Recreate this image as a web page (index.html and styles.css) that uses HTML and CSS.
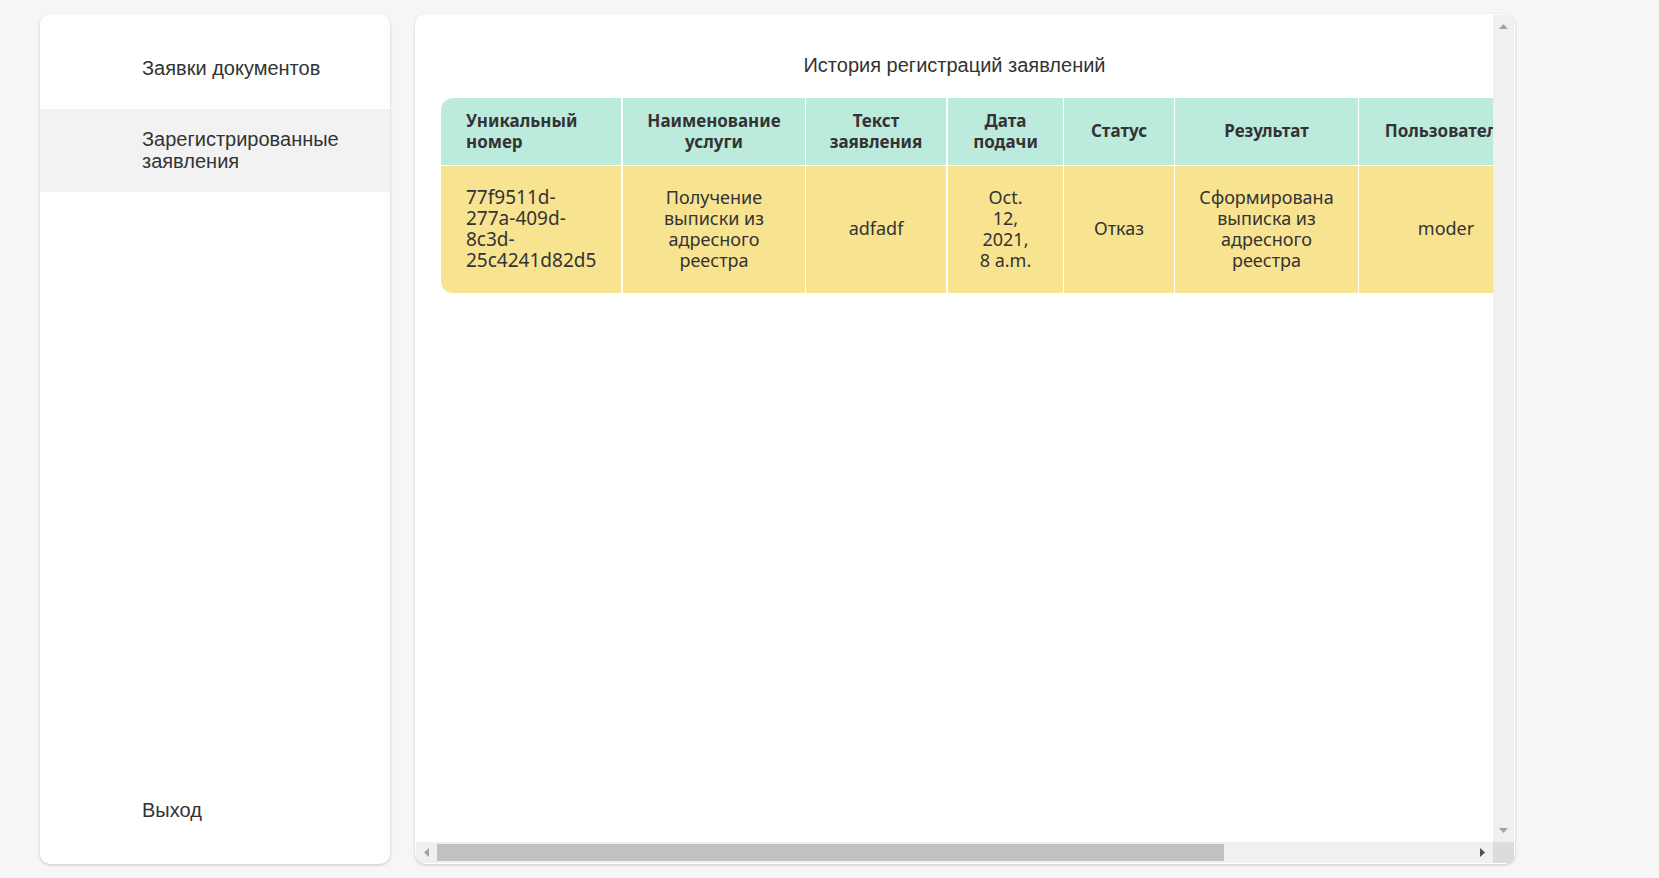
FILE: index.html
```html
<!DOCTYPE html>
<html lang="ru">
<head>
<meta charset="utf-8">
<meta name="viewport" content="width=device-width, initial-scale=1">
<title>История регистраций заявлений</title>
<link rel="stylesheet" href="styles.css">
</head>
<body>
<div class="page">
  <nav class="sidebar">
    <a class="nav-item" href="#documents">Заявки документов</a>
    <a class="nav-item active" href="#registered" aria-current="page">Зарегистрированные заявления</a>
    <a class="nav-item logout" href="#logout">Выход</a>
  </nav>
  <main class="panel">
    <div class="viewport">
      <h1 class="title">История регистраций заявлений</h1>
      <table class="history">
        <colgroup>
          <col class="col-id"><col class="col-service"><col class="col-text"><col class="col-date"><col class="col-status"><col class="col-result"><col class="col-user">
        </colgroup>
        <thead>
          <tr>
            <th class="thick" scope="col">Уникальный номер</th>
            <th scope="col">Наименование услуги</th>
            <th class="thick" scope="col">Текст заявления</th>
            <th scope="col">Дата подачи</th>
            <th scope="col">Статус</th>
            <th scope="col">Результат</th>
            <th scope="col">Пользователь</th>
          </tr>
        </thead>
        <tbody>
          <tr>
            <td class="thick number">77f9511d-<br>277a-409d-<br>8c3d-<br>25c4241d82d5</td>
            <td>Получение выписки из адресного реестра</td>
            <td class="thick">adfadf</td>
            <td>Oct.<br>12,<br>2021,<br>8 a.m.</td>
            <td>Отказ</td>
            <td>Сформирована выписка из адресного реестра</td>
            <td>moder</td>
          </tr>
        </tbody>
      </table>
    </div>
    <div class="bar bar-vertical" aria-hidden="true">
      <svg class="arrow" viewBox="0 0 21 21"><path class="muted" d="M6 14h9L10.500 9z"/></svg>
      <svg class="arrow" viewBox="0 0 21 21"><path class="muted" d="M6 7h9L10.500 12z"/></svg>
    </div>
    <div class="bar bar-horizontal" aria-hidden="true">
      <svg class="arrow" viewBox="0 0 21 21"><path class="muted" d="M13 6v9L8 10.500z"/></svg>
      <div class="track"><div class="thumb"></div></div>
      <svg class="arrow" viewBox="0 0 21 21"><path class="strong" d="M8 6v9l5-4.500z"/></svg>
    </div>
    <div class="corner"></div>
  </main>
</div>
</body>
</html>
```
FILE: styles.css
```css
* { box-sizing: border-box; }

body {
  margin: 0;
  background: #f6f6f6;
  color: #333;
  font: 20px/22px "Liberation Sans", Arial, sans-serif;
}

.page {
  display: flex;
  gap: 25px;
  height: 100vh;
  padding: 14px 40px;
}

.sidebar,
.panel {
  background: #fff;
  border-radius: 10px;
  box-shadow: 0 1px 3px rgba(0, 0, 0, 0.2);
  overflow: hidden;
}

.sidebar {
  display: flex;
  flex: 0 0 350px;
  flex-direction: column;
  gap: 10px;
  padding: 24px 0 23px;
}

.nav-item {
  padding: 19px 40px 20px 102px;
  color: inherit;
  text-decoration: none;
}

.active { background: #f2f2f2; }
.logout { margin-top: auto; }

.panel {
  display: grid;
  flex: 1;
  grid-template: minmax(0, 1fr) 21px / minmax(0, 1fr) 21px;
  max-width: 1100px;
  padding: 1px;
}

.viewport {
  overflow: auto;
  padding: 39px 25px 25px;
  scrollbar-width: none;
}

.title {
  margin: 0 0 22px;
  font-size: 20px;
  font-weight: 400;
  text-align: center;
}

.history {
  width: 1093px;
  table-layout: fixed;
  border-spacing: 0;
  font: 18px/21px "Noto Sans", "Open Sans", sans-serif;
  text-align: center;
}

.col-id { width: 182px; }
.col-service { width: 183px; }
.col-text { width: 142px; }
.col-date { width: 116px; }
.col-status { width: 111px; }
.col-result { width: 184px; }
.col-user { width: 175px; }

th,
td {
  padding: 10px 20px 12px;
  border-right: 1px solid #fff;
  background: #f8e391;
  background-clip: padding-box;
}

th {
  height: 68px;
  border-bottom: 1px solid #fff;
  background-color: #bcebdd;
  font-size: 17px;
  font-weight: 700;
}

td { height: 127px; }

.thick { border-right-width: 2px; }
.number { font-size: 19px; }

th:first-child {
  padding-left: 25px;
  border-top-left-radius: 12px;
  text-align: left;
}

td:first-child {
  padding-left: 25px;
  border-bottom-left-radius: 12px;
  text-align: left;
}

.bar {
  display: flex;
  background: #f0f0f0;
}

.bar-vertical {
  flex-direction: column;
  justify-content: space-between;
}

.arrow {
  flex: none;
  width: 21px;
  height: 21px;
}

.muted { fill: #a3a3a3; }
.strong { fill: #505050; }

.track {
  flex: 1;
  padding: 2px 0;
}

.thumb {
  width: 76%;
  height: 17px;
  background: #c1c1c1;
}

.corner { background: #dcdcdc; }
```
